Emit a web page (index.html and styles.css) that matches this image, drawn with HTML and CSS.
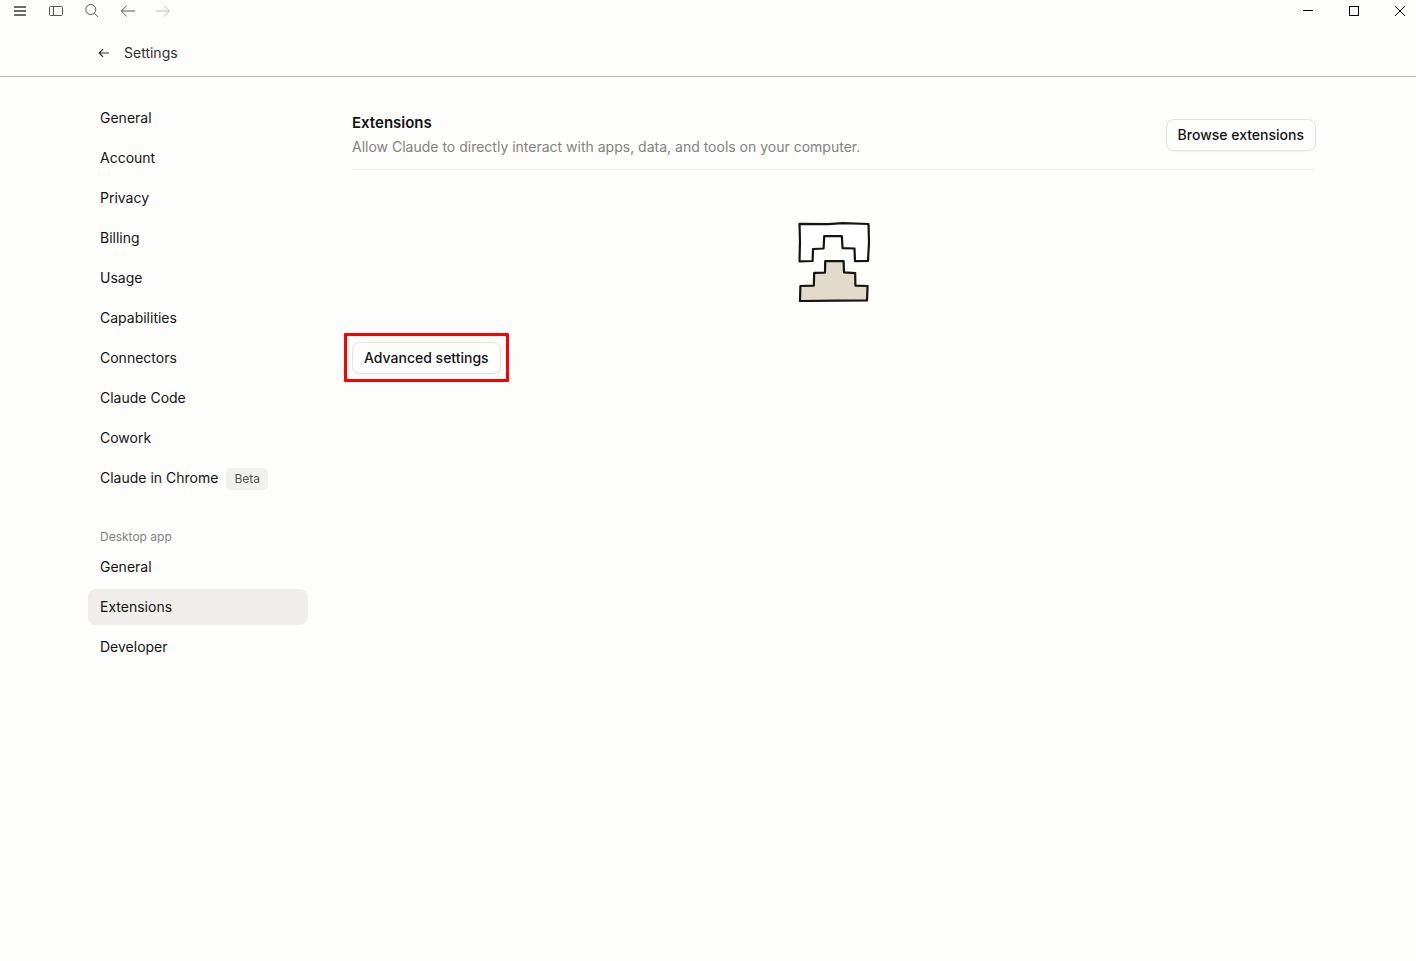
FILE: index.html
```html
<!DOCTYPE html>
<html lang="en">
<head>
    <meta charset="UTF-8">
    <title>Settings - Extensions</title>
    <meta name="viewport" content="width=device-width, initial-scale=1.0">
    <link rel="stylesheet" href="styles.css">
</head>
<body>
    <div class="titlebar">
        <div class="titlebar-tools">
            <button type="button" aria-label="Menu">
                <svg width="16" height="16" viewBox="0 0 16 16"><path d="M2 4h12M2 8h12M2 12h12" stroke="#6b6b6b" stroke-width="2"/></svg>
            </button>
            <button type="button" aria-label="Toggle sidebar">
                <svg width="16" height="16" viewBox="0 0 16 16"><rect x="1.5" y="3.5" width="13" height="9" rx="1"/><path d="M5.5 3.5v9"/></svg>
            </button>
            <button type="button" aria-label="Search">
                <svg width="16" height="16" viewBox="0 0 16 16"><circle cx="6.8" cy="6.5" r="5"/><path d="M10.5 10.3L14.2 14"/></svg>
            </button>
            <button type="button" aria-label="Back">
                <svg width="16" height="16" viewBox="0 0 16 16"><path d="M15 8H1.5M6.5 2.8L1.3 8l5.2 5.2"/></svg>
            </button>
            <button type="button" aria-label="Forward" disabled>
                <svg width="16" height="16" viewBox="0 0 16 16"><path d="M0 8h13.5M8.3 2.8L13.5 8l-5.2 5.2"/></svg>
            </button>
        </div>
        <div class="window-controls">
            <button type="button" aria-label="Minimize">
                <svg width="12" height="12" viewBox="0 0 12 12"><path d="M1 5.5h10"/></svg>
            </button>
            <button type="button" aria-label="Maximize">
                <svg width="12" height="12" viewBox="0 0 12 12"><rect x="1.5" y="1.5" width="9" height="9"/></svg>
            </button>
            <button type="button" aria-label="Close">
                <svg width="12" height="12" viewBox="0 0 12 12"><path d="M1 1l10 10M11 1L1 11"/></svg>
            </button>
        </div>
    </div>

    <header class="page-header">
        <a href="#" class="back-link">
            <svg width="12" height="12" viewBox="0 0 12 12"><path d="M11 6H1.5M5 2.2L1.2 6 5 9.8" stroke-width="1.2"/></svg>
            Settings
        </a>
    </header>

    <div class="layout">
        <nav class="sidebar">
            <a href="#">General</a>
            <a href="#">Account</a>
            <a href="#">Privacy</a>
            <a href="#">Billing</a>
            <a href="#">Usage</a>
            <a href="#">Capabilities</a>
            <a href="#">Connectors</a>
            <a href="#">Claude Code</a>
            <a href="#">Cowork</a>
            <a href="#">Claude in Chrome <span class="badge">Beta</span></a>
            <h2>Desktop app</h2>
            <a href="#">General</a>
            <a href="#" class="active" aria-current="page">Extensions</a>
            <a href="#">Developer</a>
        </nav>

        <main>
            <div class="section-header">
                <div>
                    <h1>Extensions</h1>
                    <p>Allow Claude to directly interact with apps, data, and tools on your computer.</p>
                </div>
                <button type="button" class="btn">Browse extensions</button>
            </div>

            <svg class="illustration" width="72" height="80" viewBox="0 0 72 80">
                <path d="M1.5 1.8L30 2.2 45 1.2 70.5 2 71 20 70 39 57 39.2 56.5 26.5 44.6 26.2 43.8 14 26.2 14.2 25.6 26.5 15 27 14.6 39 1.5 39.3 2 20z" fill="#fff"/>
                <path d="M27.2 39.2L45.6 39 46 50.4 57.2 51.2 57.4 63.6 69.6 64 69 78.4 40 78.6 2 79 2.4 64 15.8 63.6 16.2 50.8 27 50.6z" fill="#e3dacc"/>
            </svg>

            <div class="highlight">
                <button type="button" class="btn">Advanced settings</button>
            </div>
        </main>
    </div>
</body>
</html>
```
FILE: styles.css
```css
* {
    box-sizing: border-box;
}
body {
    margin: 0;
    font-family: Inter, "Noto Sans", sans-serif;
    font-size: 14px;
    line-height: 20px;
    color: #141413;
    background-color: #fdfdfc;
}
h1, h2, p {
    margin: 0;
}
a {
    color: inherit;
    text-decoration: none;
}
button {
    font: inherit;
    color: inherit;
    cursor: pointer;
}
svg {
    display: block;
    fill: none;
    stroke: currentColor;
}

/* window title bar */
.titlebar {
    display: flex;
    justify-content: space-between;
    height: 22px;
}
.titlebar button {
    display: flex;
    align-items: center;
    justify-content: center;
    padding: 0;
    border: none;
    background: none;
}
.titlebar-tools {
    display: flex;
    gap: 12px;
    padding-left: 8px;
    color: #555;
}
.titlebar-tools button {
    width: 24px;
}
.titlebar-tools button:disabled {
    color: #bbb;
    cursor: default;
}
.window-controls {
    display: flex;
    color: #000;
}
.window-controls button {
    width: 46px;
}
.window-controls button:last-child {
    margin-right: -7px;
}

.page-header {
    display: flex;
    align-items: center;
    height: 55px;
    padding: 8px 98px 0;
    border-bottom: 1px solid #b5b5b2;
}
.back-link {
    display: flex;
    align-items: center;
    gap: 14px;
    color: #30302e;
}

.layout {
    display: flex;
    gap: 44px;
    padding: 23px 100px 40px 88px;
}
.sidebar {
    display: flex;
    flex-direction: column;
    flex: 0 0 220px;
    gap: 4px;
}
.sidebar a {
    display: flex;
    align-items: center;
    gap: 8px;
    height: 36px;
    padding: 0 12px;
    border-radius: 8px;
}
.sidebar a:hover,
.sidebar a.active {
    background-color: #efeeeb;
}
.sidebar h2 {
    margin-top: 29px;
    padding: 0 12px;
    font-size: 12px;
    font-weight: 400;
    line-height: 16px;
    color: #83827d;
}
.badge {
    margin-top: 2px;
    padding: 3px 8px;
    border-radius: 5px;
    background-color: #f0f0ee;
    font-size: 12px;
    line-height: 16px;
    color: #555551;
}

main {
    flex: 1;
    min-width: 0;
    padding-top: 11px;
}
.section-header {
    display: flex;
    align-items: center;
    justify-content: space-between;
    gap: 16px;
    padding-bottom: 10px;
    border-bottom: 1px solid #efefed;
}
.section-header h1 {
    font-size: 15px;
    font-weight: 600;
    line-height: 24px;
}
.section-header p {
    line-height: 24px;
    color: #83827d;
}
.btn {
    height: 32px;
    padding: 0 11px;
    border: 1px solid #e3e2df;
    border-radius: 8px;
    background-color: #fefefe;
    box-shadow: 0 1px 2px rgba(0,0,0,0.04);
    font-weight: 500;
    white-space: nowrap;
}
.illustration {
    margin: 52px auto 40px;
    stroke: #141413;
    stroke-width: 2.2;
    stroke-linejoin: round;
}

/* red frame around the button */
.highlight {
    position: relative;
    width: fit-content;
}
.highlight::after {
    content: "";
    position: absolute;
    inset: -9px -8px -8px;
    border: 3px solid #ff0000;
    border-radius: 1px;
    pointer-events: none;
}
```
